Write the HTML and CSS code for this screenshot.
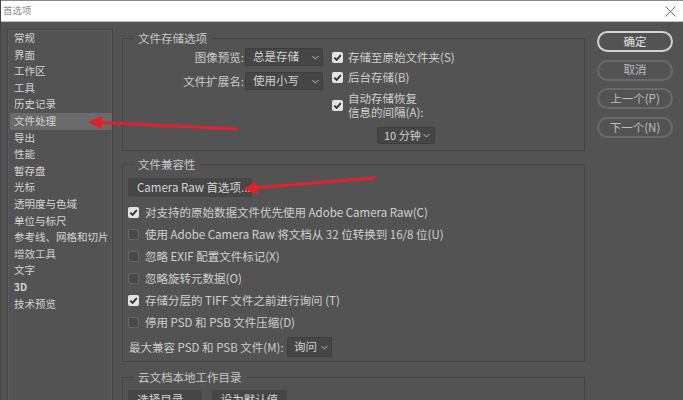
FILE: index.html
```html
<!DOCTYPE html>
<html lang="zh-CN">
<head>
<meta charset="utf-8">
<title>首选项</title>
<link rel="stylesheet" href="styles.css">
</head>
<body>
<div class="window">
  <header class="titlebar">
    <span class="title">首选项</span>
    <svg class="close" viewBox="0 0 11 11"><path d="M0.5 0.5L10.5 10.5M10.5 0.5L0.5 10.5" stroke="#6e6e6e" stroke-width="1" fill="none"/></svg>
  </header>
  <main class="content">
    <nav class="sidebar">
      <ul class="nav">
        <li>常规</li>
        <li>界面</li>
        <li>工作区</li>
        <li>工具</li>
        <li>历史记录</li>
        <li class="active">文件处理</li>
        <li>导出</li>
        <li>性能</li>
        <li>暂存盘</li>
        <li>光标</li>
        <li>透明度与色域</li>
        <li>单位与标尺</li>
        <li>参考线、网格和切片</li>
        <li>增效工具</li>
        <li>文字</li>
        <li class="latin">3D</li>
        <li>技术预览</li>
      </ul>
    </nav>

    <section class="panels">
      <fieldset class="group g1">
        <legend>文件存储选项</legend>
        <div class="g1-body">
          <div class="fields">
            <div class="field">
              <span class="label">图像预览:</span>
              <div class="select w78"><span>总是存储</span><svg class="chev" viewBox="0 0 7 5"><path d="M0.5 1L3.5 4L6.5 1" stroke="#bdbdbd" stroke-width="1" fill="none"/></svg></div>
            </div>
            <div class="field">
              <span class="label">文件扩展名:</span>
              <div class="select w78"><span>使用小写</span><svg class="chev" viewBox="0 0 7 5"><path d="M0.5 1L3.5 4L6.5 1" stroke="#bdbdbd" stroke-width="1" fill="none"/></svg></div>
            </div>
          </div>
          <div class="checks">
            <div class="check g1c">
              <span class="cb on"><svg viewBox="0 0 11 11"><path d="M2.3 5.6L4.6 7.9L8.8 3.2" stroke="#2e2e2e" stroke-width="1.8" fill="none"/></svg></span>
              <span>存储至原始文件夹(S)</span>
            </div>
            <div class="check g1c">
              <span class="cb on"><svg viewBox="0 0 11 11"><path d="M2.3 5.6L4.6 7.9L8.8 3.2" stroke="#2e2e2e" stroke-width="1.8" fill="none"/></svg></span>
              <span>后台存储(B)</span>
            </div>
            <div class="check g1c multi">
              <span class="cb on"><svg viewBox="0 0 11 11"><path d="M2.3 5.6L4.6 7.9L8.8 3.2" stroke="#2e2e2e" stroke-width="1.8" fill="none"/></svg></span>
              <span class="two-line"><span class="ln">自动存储恢复</span><span class="ln">信息的间隔(A):</span></span>
            </div>
            <div class="select interval"><span>10 分钟</span><svg class="chev" viewBox="0 0 7 5"><path d="M0.5 1L3.5 4L6.5 1" stroke="#bdbdbd" stroke-width="1" fill="none"/></svg></div>
          </div>
        </div>
      </fieldset>

      <fieldset class="group g2">
        <legend>文件兼容性</legend>
        <div class="g2-body">
          <div class="pbtn crbtn">Camera Raw 首选项...</div>
          <div class="rows">
            <div class="check g2c">
              <span class="cb on"><svg viewBox="0 0 11 11"><path d="M2.3 5.6L4.6 7.9L8.8 3.2" stroke="#2e2e2e" stroke-width="1.8" fill="none"/></svg></span>
              <span>对支持的原始数据文件优先使用 Adobe Camera Raw(C)</span>
            </div>
            <div class="check g2c">
              <span class="cb off"></span>
              <span>使用 Adobe Camera Raw 将文档从 32 位转换到 16/8 位(U)</span>
            </div>
            <div class="check g2c">
              <span class="cb off"></span>
              <span>忽略 EXIF 配置文件标记(X)</span>
            </div>
            <div class="check g2c">
              <span class="cb off"></span>
              <span>忽略旋转元数据(O)</span>
            </div>
            <div class="check g2c">
              <span class="cb on"><svg viewBox="0 0 11 11"><path d="M2.3 5.6L4.6 7.9L8.8 3.2" stroke="#2e2e2e" stroke-width="1.8" fill="none"/></svg></span>
              <span>存储分层的 TIFF 文件之前进行询问 (T)</span>
            </div>
            <div class="check g2c">
              <span class="cb off"></span>
              <span>停用 PSD 和 PSB 文件压缩(D)</span>
            </div>
          </div>
          <div class="maxrow">
            <span class="maxlabel">最大兼容 PSD 和 PSB 文件(M):</span>
            <div class="select w45"><span>询问</span><svg class="chev" viewBox="0 0 7 5"><path d="M0.5 1L3.5 4L6.5 1" stroke="#bdbdbd" stroke-width="1" fill="none"/></svg></div>
          </div>
        </div>
      </fieldset>

      <fieldset class="group g3">
        <legend>云文档本地工作目录</legend>
        <div class="g3-body">
          <div class="pbtn dirbtn">选择目录...</div>
          <div class="pbtn defbtn">设为默认值</div>
        </div>
      </fieldset>
    </section>

    <aside class="buttons">
      <div class="btn primary">确定</div>
      <div class="btn">取消</div>
      <div class="btn">上一个(P)</div>
      <div class="btn">下一个(N)</div>
    </aside>
  </main>
</div>

<svg class="arrows" viewBox="0 0 683 400" width="683" height="400">
  <line x1="236" y1="129" x2="99" y2="122.5" stroke="#e3202c" stroke-width="3.2" stroke-linecap="round"/>
  <polygon points="88,122 102.3,115.8 101.7,129.2" fill="#e3202c"/>
  <line x1="374" y1="178" x2="254" y2="188" stroke="#e3202c" stroke-width="3.2" stroke-linecap="round"/>
  <polygon points="243,189 256.3,181.6 257.4,194.6" fill="#e3202c"/>
</svg>
</body>
</html>
```

FILE: styles.css
```css
* { box-sizing: border-box; }
html, body { margin: 0; padding: 0; }
body {
  position: relative;
  width: 683px;
  height: 400px;
  overflow: hidden;
  background: #535353;
  font-family: "Noto Sans CJK SC", "Noto Sans", sans-serif;
  color: #d2d2d2;
}

.window {
  width: 683px;
  height: 400px;
  border-left: 1px solid #434343;
}

/* Title bar */
.titlebar {
  height: 22px;
  background: #ffffff;
  border-top: 1px solid #8a8a8a;
  border-bottom: 1px solid #c2c2c2;
  display: flex;
  align-items: center;
  justify-content: space-between;
  padding: 0 7px 0 2px;
}
.title {
  font-size: 9.5px;
  line-height: 1;
  color: #8e8e8e;
}
.close { width: 11px; height: 11px; }

/* Main content */
.content {
  display: flex;
  align-items: flex-start;
  height: 378px;
  padding: 7px 0 0 6px;
  overflow: hidden;
}

.sidebar {
  flex: none;
  width: 106px;
  height: 380px;
  border: 1px solid #444444;
  box-shadow: inset 1px 1px 0 #5b5b5b, inset -1px 0 0 #5b5b5b;
}
.nav {
  list-style: none;
  margin: 0;
  padding: 0 0 0 2px;
}
.nav li {
  height: 16.6px;
  line-height: 16.6px;
  font-size: 10.5px;
  padding-left: 4px;
  white-space: nowrap;
  color: #d4d4d4;
}
.nav li.active { background: #6b6b6b; }
.nav li.latin { font-weight: 700; font-size: 10px; }

/* Group boxes */
.panels {
  flex: none;
  width: 463px;
  margin-left: 9px;
  display: flex;
  flex-direction: column;
}
.group {
  margin: 0;
  padding: 0;
  min-width: 0;
  border: 1px solid #464646;
}
.group legend {
  margin-left: 11px;
  padding: 0 4px;
  font-size: 11.5px;
  line-height: 16px;
  color: #c8c8c8;
}
.g1 { margin-top: 1px; }
.g2 { margin-top: 5px; }
.g3 { margin-top: 7px; }

.g1-body {
  display: flex;
  height: 104px;
  padding-top: 2px;
}
.fields {
  width: 200px;
  display: flex;
  flex-direction: column;
  gap: 6px;
}
.field {
  display: flex;
  justify-content: flex-end;
  align-items: center;
  gap: 1px;
  height: 18px;
  font-size: 11.5px;
}
.label { color: #cbcbcb; white-space: nowrap; }

.checks {
  margin-left: 9px;
  margin-top: -1px;
  display: flex;
  flex-direction: column;
}
.check {
  display: flex;
  align-items: center;
  font-size: 11.5px;
  white-space: nowrap;
  color: #d0d0d0;
}
.g1c { height: 20px; gap: 5px; }
.g1c.multi {
  height: 28px;
  margin-top: 4px;
}
.two-line {
  display: flex;
  flex-direction: column;
  justify-content: space-between;
  height: 28px;
}
.ln { display: block; height: 14px; line-height: 14px; }
.g2c { height: 22px; gap: 6px; }

.cb {
  flex: none;
  width: 11px;
  height: 11px;
  border-radius: 2px;
  display: block;
}
.cb svg { display: block; width: 11px; height: 11px; }
.cb.on { background: #e3e3e3; }
.cb.off { background: #494949; border: 1px solid #686868; }

/* Dropdowns */
.select {
  flex: none;
  display: flex;
  align-items: center;
  justify-content: space-between;
  height: 18px;
  background: #464646;
  border: 1px solid #3d3d3d;
  border-radius: 2px;
  padding: 0 3px 0 7px;
  font-size: 11.5px;
  line-height: 1;
  color: #d2d2d2;
  white-space: nowrap;
}
.chev { width: 7px; height: 5px; flex: none; }
.w78 { width: 78px; }
.w45 { width: 45px; height: 20px; padding-left: 6px; }
.interval {
  width: 58px;
  height: 17px;
  margin-top: 8px;
  margin-left: 45px;
  padding: 0 4px 0 6px;
  font-size: 11px;
}

/* Group 2 */
.g2-body {
  height: 189px;
  padding: 6px 0 0 5px;
}
.pbtn {
  display: flex;
  align-items: center;
  height: 19px;
  background: #464646;
  border-radius: 2px;
  font-size: 11.5px;
  line-height: 1;
  color: #d6d6d6;
  white-space: nowrap;
}
.crbtn { width: 124px; padding-left: 9px; }
.rows { margin-top: 4px; }
.maxrow {
  display: flex;
  align-items: center;
  height: 20px;
  margin-top: 4px;
  padding-left: 1px;
  font-size: 11.5px;
}
.maxlabel { width: 158px; color: #cbcbcb; white-space: nowrap; }

/* Group 3 */
.g3-body {
  display: flex;
  gap: 10px;
  padding: 5px 0 0 5px;
  height: 40px;
}
.dirbtn { width: 74px; height: 20px; justify-content: center; }
.defbtn { width: 75px; height: 20px; justify-content: center; }

/* Dialog buttons */
.buttons {
  flex: none;
  width: 76px;
  margin-left: 12px;
  margin-top: 2px;
  display: flex;
  flex-direction: column;
  gap: 7.7px;
}
.btn {
  height: 21px;
  border: 2px solid #6a6a6a;
  border-radius: 11px;
  display: flex;
  align-items: center;
  justify-content: center;
  font-size: 11.5px;
  line-height: 1;
  color: #bdbdbd;
  white-space: nowrap;
}
.btn.primary { border-color: #d2d2d2; color: #e4e4e4; }

/* Annotation arrows overlay */
.arrows {
  position: absolute;
  left: 0;
  top: 0;
  pointer-events: none;
}
```
